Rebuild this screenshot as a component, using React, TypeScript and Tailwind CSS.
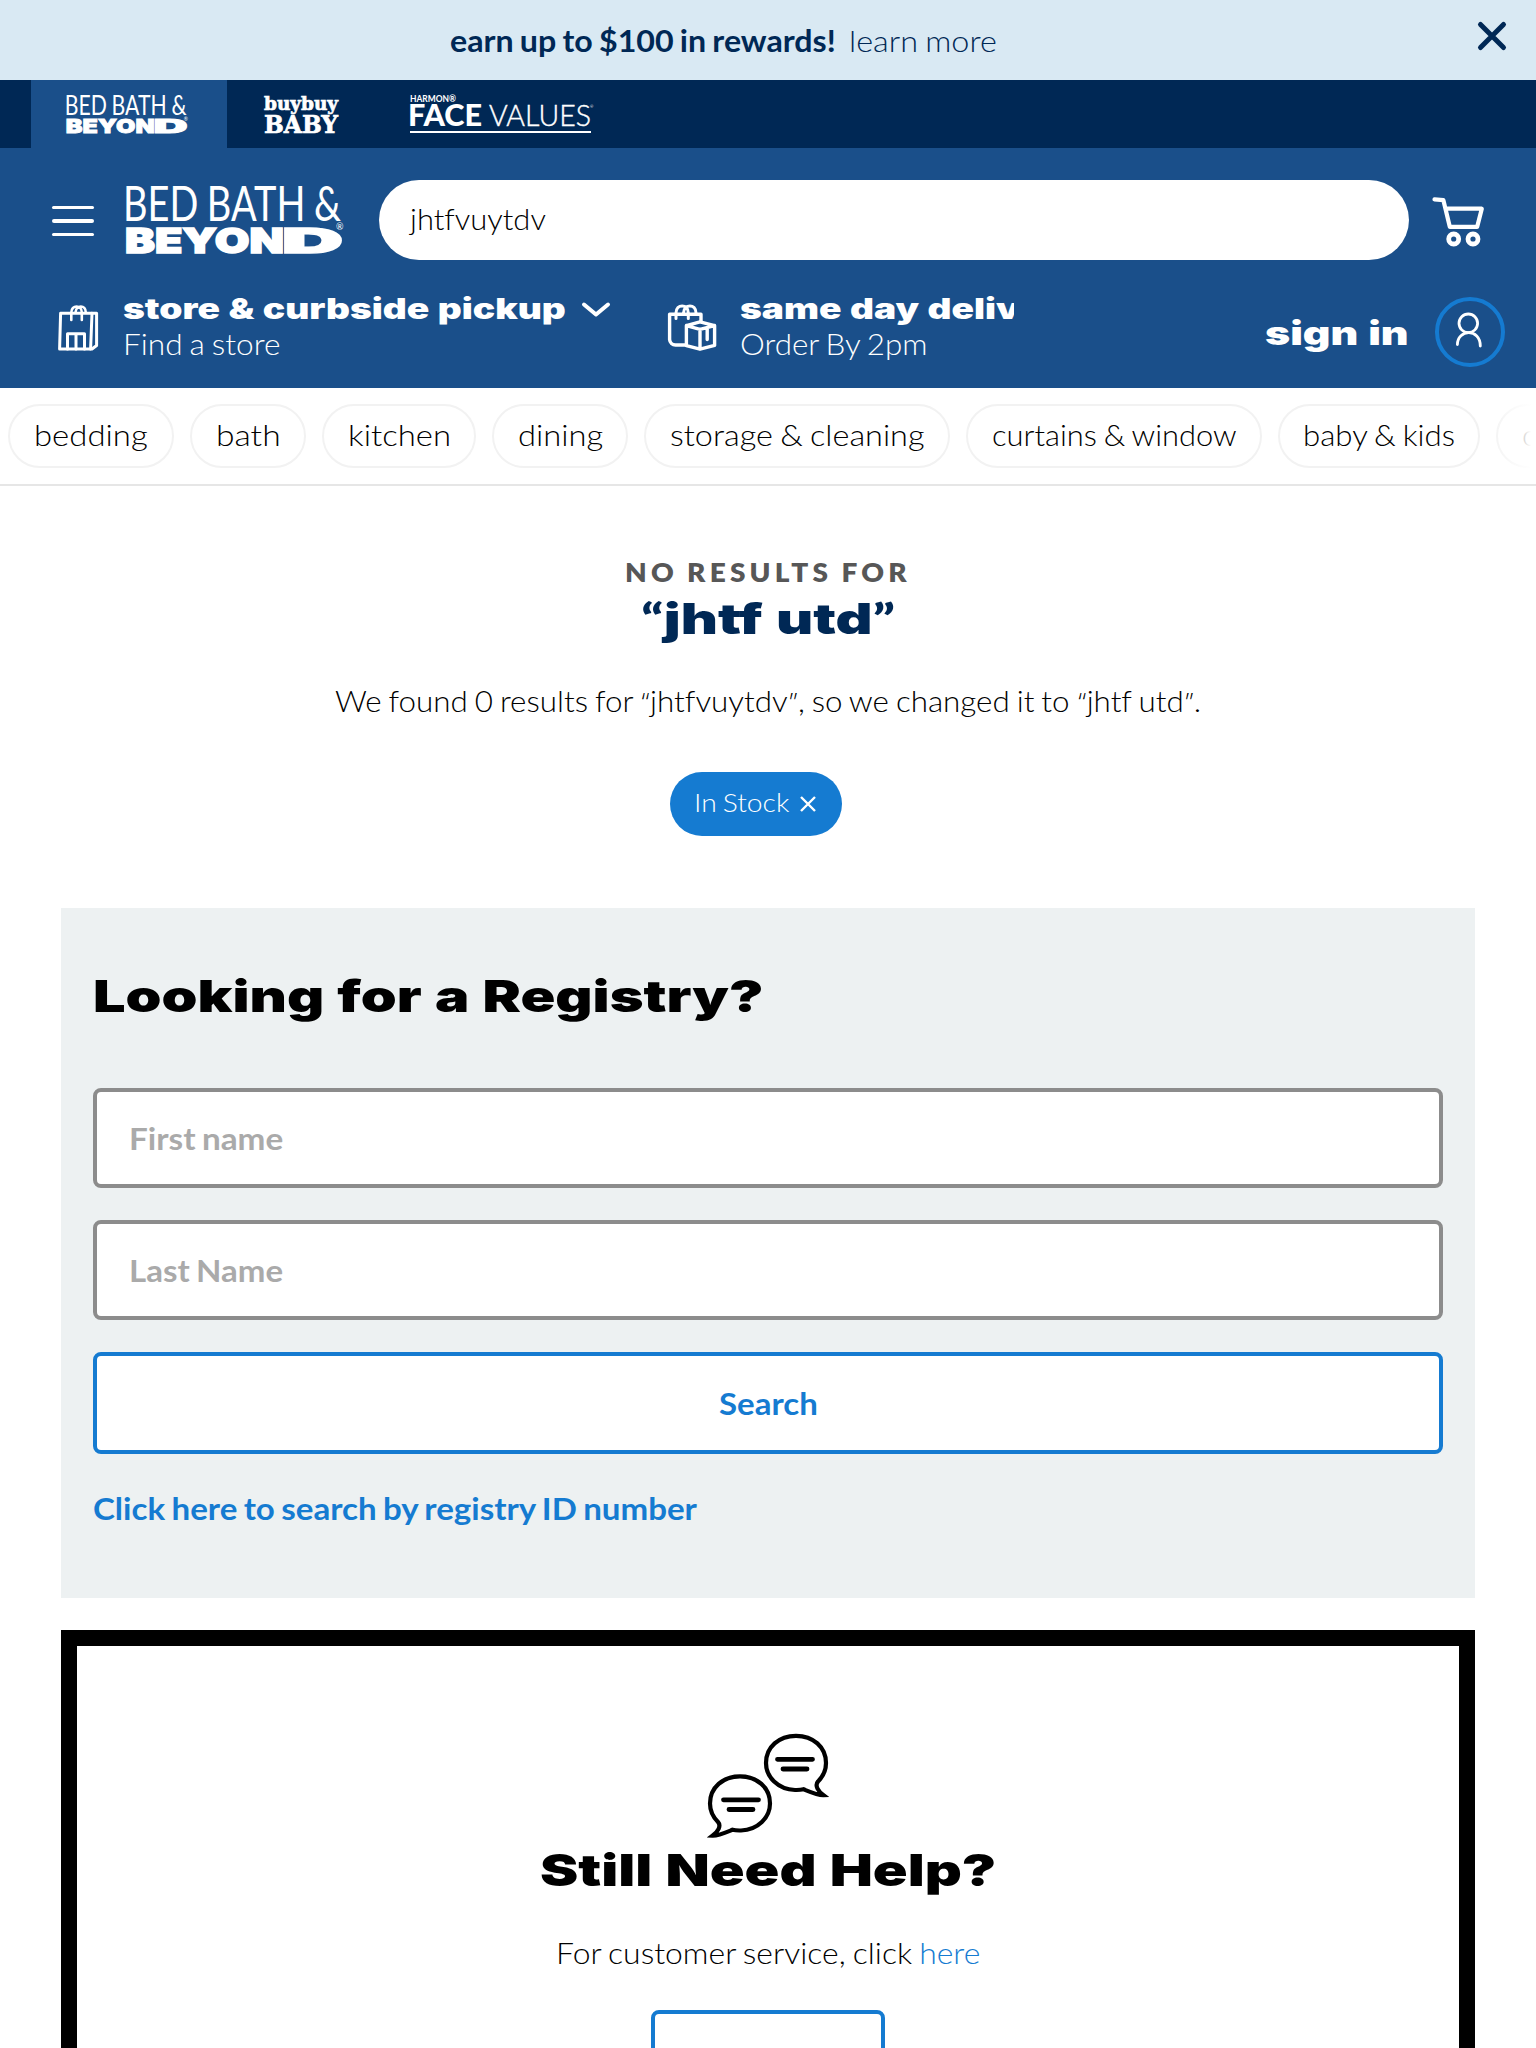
import { useLayoutEffect, useRef, useState } from 'react';
import type { ReactNode } from 'react';

const SANS = "font-['Lato',sans-serif]";
const WIDE = "font-['Inter',sans-serif] font-black [word-spacing:0.03em]";

/* One line of type, stretched so that it spans its box or the given width. */
function Fit({ className, span, children }: { className: string; span?: number; children: ReactNode }) {
  const box = useRef<HTMLDivElement>(null);
  const line = useRef<HTMLSpanElement>(null);
  const [scale, setScale] = useState(1);
  useLayoutEffect(() => {
    if (box.current && line.current) {
      setScale((span ?? box.current.offsetWidth) / line.current.offsetWidth);
    }
  }, [span]);
  return (
    <div ref={box} className={`shrink-0 whitespace-nowrap ${className}`}>
      <span ref={line} className="inline-block origin-left" style={{ transform: `scaleX(${scale})` }}>
        {children}
      </span>
    </div>
  );
}

function Quoted({ children }: { children: ReactNode }) {
  return (
    <>
      <span className="font-['Inter',sans-serif] text-[26px] font-extralight">“</span>
      {children}
      <span className="font-['Inter',sans-serif] text-[26px] font-extralight">”</span>
    </>
  );
}

function BrandLogo({ className }: { className: string }) {
  return (
    <svg viewBox="0 0 217 68" className={`overflow-visible ${className}`} fill="#fff">
      <text x="-3" y="34.8" fontFamily="Lato" fontWeight="400" fontSize="48" textLength="218" lengthAdjust="spacingAndGlyphs">BED BATH &amp;</text>
      <text x="-1" y="66.5" fontFamily="Inter" fontWeight="900" fontSize="34" stroke="#fff" strokeWidth="1.5" textLength="159" lengthAdjust="spacingAndGlyphs">BEYON</text>
      <text x="156" y="66.5" fontFamily="Inter" fontWeight="900" fontSize="34" stroke="#fff" strokeWidth="1.5" textLength="61" lengthAdjust="spacingAndGlyphs">D</text>
      <text x="210" y="44" fontFamily="Lato" fontWeight="400" fontSize="9">®</text>
    </svg>
  );
}

function BabyLogo() {
  return (
    <svg viewBox="0 0 74 38" className="ml-[37px] h-[38px] w-[74px] overflow-visible" fill="#fff" stroke="#fff" strokeWidth="0.7">
      <text x="0" y="15" fontFamily="DejaVu Serif" fontWeight="700" fontSize="19" textLength="74" lengthAdjust="spacingAndGlyphs">buybuy</text>
      <text x="0" y="37.5" fontFamily="DejaVu Serif" fontWeight="700" fontSize="24.5" textLength="74" lengthAdjust="spacingAndGlyphs">BABY</text>
    </svg>
  );
}

function HarmonLogo() {
  return (
    <svg viewBox="0 0 184 40" className="ml-[72px] h-[40px] w-[184px] overflow-visible" fill="#fff">
      <text x="0" y="7.5" fontFamily="Lato" fontWeight="700" fontSize="8.8" textLength="46" lengthAdjust="spacingAndGlyphs">HARMON®</text>
      <text x="-2" y="31.5" fontFamily="Lato" fontWeight="900" fontSize="29.5" textLength="74" lengthAdjust="spacingAndGlyphs">FACE</text>
      <text x="79" y="31.5" fontFamily="Lato" fontWeight="300" fontSize="29.5" stroke="#fff" strokeWidth="0.4" textLength="102" lengthAdjust="spacingAndGlyphs">VALUES</text>
      <text x="180" y="14" fontFamily="Lato" fontWeight="400" fontSize="4">®</text>
      <rect x="0" y="37" width="181" height="2" />
    </svg>
  );
}

function StoreBagIcon() {
  return (
    <svg viewBox="0 0 42 48" className="h-12 w-[42px]" fill="none" stroke="#fff" strokeWidth="3" strokeLinejoin="round" strokeLinecap="round">
      <path d="M3.6 10.3H39.6V42.5L35 46H2.6Z" />
      <path d="M35 10.3L33.6 46" />
      <path d="M10.5 46V30.7H27.5V46M19 30.7V46" />
      <path strokeWidth="2.6" d="M14.3 17V9.5C14.3 1.5 24.8 1.5 24.8 9.5V17M18.5 9.5C19 1.5 28.8 1.5 28.8 9.5" />
    </svg>
  );
}

function DeliveryIcon() {
  return (
    <svg viewBox="0 0 52 50" className="h-[50px] w-[52px]" fill="none" stroke="#fff" strokeWidth="3.4" strokeLinejoin="round" strokeLinecap="round">
      <path d="M20 43H9.5A6 6 0 0 1 3.6 37.5V12.3H35V19" />
      <path strokeWidth="3" d="M10 16.5V11C10 1.5 22.3 1.5 22.3 11V16.5M17.5 11C18 1.5 30 1.5 30 11" />
      <path d="M34 19.8L20.4 23.6V43.7L34 47.2L48.6 43.4V23.6ZM20.4 23.6L34 27.3L48.6 23.6M34 27.3V47M41.2 26V37.5" />
    </svg>
  );
}

function CartIcon() {
  return (
    <svg viewBox="0 0 55 53" className="mt-[3px] ml-[22px] h-[53px] w-[55px]" fill="none" stroke="#fff" strokeWidth="4.2" strokeLinejoin="round" strokeLinecap="round">
      <path d="M3.5 4.4L12.4 5.2L18.8 31.8H46.2L50.8 13.7H15" />
      <circle cx="22.7" cy="44" r="5" strokeWidth="4.8" />
      <circle cx="42" cy="44" r="5" strokeWidth="4.8" />
    </svg>
  );
}

function PersonIcon() {
  return (
    <svg viewBox="0 0 30 37" className="mr-[2px] mb-[3px] h-[37px] w-[30px]" fill="none" stroke="#fff" strokeWidth="2.8" strokeLinecap="round">
      <circle cx="14.3" cy="11.3" r="9.3" />
      <path d="M3.4 32.5C3.4 17 26.3 16 26.3 34" />
    </svg>
  );
}

function ChatIcon() {
  const bubble =
    'M97.5 59.3C94 60.2 91 60 89 60C72 59.5 60 47 60 33C60 17 73 5.8 90 5.8C107 5.8 120 17 120 33C120 41 116.5 47 112 51.5C108.5 55.5 112 61 117.5 65.2C112 65.5 103 61.5 97.5 59.3Z';
  return (
    <svg viewBox="0 0 124 112" className="h-[112px] w-[124px] shrink-0" fill="none" stroke="#000" strokeWidth="4.2" strokeLinecap="round">
      <g>
        <path d={bubble} />
        <path d="M71.5 29.3H106.5M77 39H101" strokeWidth="4.8" />
      </g>
      <g transform="matrix(-1 0 0 1 124 40.5)">
        <path d={bubble} />
        <path d="M71.5 29.3H106.5M77 39H101" strokeWidth="4.8" />
      </g>
    </svg>
  );
}

const categories = [
  { label: 'bedding', pill: 'w-[166px]', text: 'w-[114px]' },
  { label: 'bath', pill: 'w-[116px]', text: 'w-[65px]' },
  { label: 'kitchen', pill: 'w-[154px]', text: 'w-[103px]' },
  { label: 'dining', pill: 'w-[136px]', text: 'w-[85px]' },
  { label: 'storage & cleaning', pill: 'w-[306px]', text: 'w-[254px]' },
  { label: 'curtains & window', pill: 'w-[296px]', text: 'w-[245px]' },
  { label: 'baby & kids', pill: 'w-[202px]', text: 'w-[152px]' },
  { label: 'outdoor', pill: 'w-[160px]', text: 'w-[108px]' },
];

export default function App() {
  return (
    <div className={`${SANS} h-[2048px] w-[1536px] overflow-hidden bg-white text-[30px] leading-9 font-light text-black [font-variant-ligatures:none] [word-spacing:-0.05em]`}>
      <div className="flex h-20 items-center bg-[#d9e9f3] pr-[28px] pb-px pl-[450px] text-[#002855]">
        <Fit className="w-[386px] font-bold">earn up to $100 in rewards!</Fit>
        <Fit className="ml-[13px] w-[148px]">learn more</Fit>
        <svg viewBox="0 0 32 32" className="mb-[7px] ml-auto h-8 w-8" stroke="#002855" strokeWidth="5" strokeLinecap="round">
          <path d="M4.5 4.5L27.5 27.5M27.5 4.5L4.5 27.5" />
        </svg>
      </div>

      <div className="flex h-[68px] items-center bg-[#002855] pl-[31px]">
        <div className="flex h-full w-[196px] items-center bg-[#1a4f8a] pt-px pl-[35px]">
          <BrandLogo className="h-[38px] w-[122px]" />
        </div>
        <BabyLogo />
        <HarmonLogo />
      </div>

      <header className="h-[240px] bg-[#1a4f8a] pt-8 text-white">
        <div className="flex h-20 items-center pl-[52px]">
          <div className="mt-[2px] flex flex-col gap-[10px]">
            <div className="h-[3.5px] w-[42px] rounded-full bg-white" />
            <div className="h-[3.5px] w-[42px] rounded-full bg-white" />
            <div className="h-[3.5px] w-[42px] rounded-full bg-white" />
          </div>
          <BrandLogo className="ml-8 h-[68px] w-[217px]" />
          <div className="ml-9 flex h-20 w-[1030px] items-center rounded-full bg-white pb-[4px] pl-[31px] text-black">
            <Fit className="w-[136px]">jhtfvuytdv</Fit>
          </div>
          <CartIcon />
        </div>

        <div className="flex pt-[30px] pl-[57px]">
          <div className="pt-[13px]">
            <StoreBagIcon />
          </div>
          <div className="ml-[24px] pt-[1px]">
            <div className="flex">
              <Fit className={`${WIDE} w-[443px] text-[28px]`}>store &amp; curbside pickup</Fit>
              <svg viewBox="0 0 30 18" className="mt-[10px] ml-[15px] h-[18px] w-[30px]" fill="none" stroke="#fff" strokeWidth="4" strokeLinecap="round" strokeLinejoin="round">
                <path d="M3 3.5L15 13.5L27 3.5" />
              </svg>
            </div>
            <Fit className="-mt-[2px] w-[157px]">Find a store</Fit>
          </div>
          <div className="ml-[55px] pt-[12px]">
            <DeliveryIcon />
          </div>
          <div className="ml-[22px] pt-[1px]">
            <Fit span={342} className={`${WIDE} w-[274px] overflow-hidden text-[28px]`}>same day delivery</Fit>
            <Fit className="-mt-[2px] w-[188px]">Order By 2pm</Fit>
          </div>
          <Fit className={`${WIDE} mt-[25px] ml-[251px] w-[144px] text-[33px]`}>sign in</Fit>
          <div className="mt-[7px] ml-[26px] flex h-[70px] w-[70px] items-center justify-center rounded-full border-4 border-[#157bd1]">
            <PersonIcon />
          </div>
        </div>
      </header>

      <nav className="relative flex h-[98px] gap-4 overflow-hidden border-b-2 border-[#e6e6e6] pt-4 pl-2">
        {categories.map((c) => (
          <div key={c.label} className={`flex h-16 shrink-0 items-center justify-center rounded-full border-2 border-[#f2f2f2] pb-[4px] ${c.pill}`}>
            <Fit className={c.text}>{c.label}</Fit>
          </div>
        ))}
        <div className="absolute top-0 right-0 h-[94px] w-[50px] bg-linear-to-r from-transparent to-white to-90%" />
      </nav>

      <section className="flex flex-col items-center">
        <Fit span={286} className="mt-[68px] w-[286px] text-[26.5px] font-extrabold tracking-[4px] text-[#575757]">NO RESULTS FOR</Fit>
        <Fit className={`${WIDE} mt-[3px] h-[50px] w-[254px] text-[42px] leading-[50px] text-[#002855]`}>
          <span className="font-['Lato',sans-serif]">“</span>jhtf utd<span className="font-['Lato',sans-serif]">”</span>
        </Fit>
        <Fit className="mt-[39px] h-9 w-[866px]">
          We found 0 results for <Quoted>jhtfvuytdv</Quoted>, so we changed it to <Quoted>jhtf utd</Quoted>.
        </Fit>
        <div className="mt-[54px] mr-6 flex h-16 w-[172px] items-center rounded-full bg-[#157bd1] pl-6 text-white">
          <Fit className="mb-[4px] w-[95px] text-[25px]">In Stock</Fit>
          <svg viewBox="0 0 18 18" className="ml-[10px] h-[18px] w-[18px]" stroke="#fff" strokeWidth="2.4">
            <path d="M2 2L16 16M16 2L2 16" />
          </svg>
        </div>
      </section>

      <section className="mt-[72px] ml-[61px] h-[690px] w-[1414px] bg-[#edf1f2] px-8 pt-[62px] font-bold">
        <Fit className={`${WIDE} w-[670px] text-[44px] leading-[52px]`}>Looking for a Registry?</Fit>
        <div className="mt-[66px] flex h-[100px] items-center rounded-lg border-4 border-[#8c8c8c] bg-white pl-8 text-[#aaa]">
          <Fit className="w-[154px]">First name</Fit>
        </div>
        <div className="mt-8 flex h-[100px] items-center rounded-lg border-4 border-[#8c8c8c] bg-white pl-8 text-[#aaa]">
          <Fit className="w-[154px]">Last Name</Fit>
        </div>
        <div className="mt-8 flex h-[102px] items-center justify-center rounded-lg border-4 border-[#157bd1] bg-white text-[#157bd1]">
          <Fit className="w-[99px]">Search</Fit>
        </div>
        <Fit className="mt-[36px] w-[604px] text-[#157bd1]">Click here to search by registry ID number</Fit>
      </section>

      <section className="mt-8 ml-[61px] flex h-[500px] w-[1414px] flex-col items-center border-[16px] border-black pt-[84px]">
        <ChatIcon />
        <Fit className={`${WIDE} mt-[2px] w-[456px] text-[44px] leading-[52px]`}>Still Need Help?</Fit>
        <Fit className="mt-[38px] w-[424px]">
          For customer service, click <span className="text-[#157bd1]">here</span>
        </Fit>
        <div className="mt-[40px] h-[100px] w-[234px] shrink-0 rounded-lg border-4 border-[#157bd1]" />
      </section>
    </div>
  );
}
